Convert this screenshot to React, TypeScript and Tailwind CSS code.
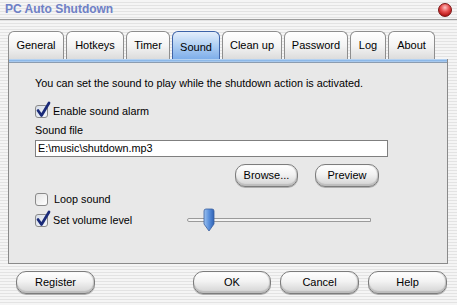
import React from 'react';

const tabs = [
  { label: 'General', w: 'w-[56px]' },
  { label: 'Hotkeys', w: 'w-[58px]' },
  { label: 'Timer', w: 'w-[44px]' },
  { label: 'Sound', w: 'w-[48px]', active: true },
  { label: 'Clean up', w: 'w-[60px]' },
  { label: 'Password', w: 'w-[64px]' },
  { label: 'Log', w: 'w-[36px]' },
  { label: 'About', w: 'w-[47px]' },
];

const Tab = ({ label, w, active }: { label: string; w: string; active?: boolean }) => (
  <div
    className={
      active
        ? `${w} h-[28px] flex items-center justify-center pt-[3px] rounded-t-[6px] border border-b-0 border-[#3d63a8] bg-[linear-gradient(180deg,#e4eefb_0%,#b4d2f4_45%,#7eaeea_100%)]`
        : `${w} h-[28px] flex items-center justify-center rounded-t-[6px] border border-b-0 border-[#8e8e8e] bg-[linear-gradient(180deg,#ffffff_0%,#f4f4f4_50%,#dcdcdc_100%)]`
    }
  >
    {label}
  </div>
);

const Button = ({ label, w }: { label: string; w: string }) => (
  <button
    className={`${w} h-[23px] rounded-[10px] border border-[#7c7c7c] bg-[linear-gradient(180deg,#ffffff_0%,#f2f2f2_45%,#d2d2d2_100%)] shadow-[inset_0_-2px_1px_#bdbdbd,inset_-1px_0_1px_#c8c8c8,0_1px_0_#b0b0b0] flex items-center justify-center leading-none`}
  >
    {label}
  </button>
);

const CheckBox = ({ checked }: { checked?: boolean }) => (
  <div className="relative w-[14px] h-[14px] shrink-0">
    <div
      className={
        checked
          ? 'absolute left-0 top-[1px] w-[13px] h-[13px] rounded-[3px] border border-[#8a8a8a] bg-[linear-gradient(135deg,#d6dde8,#f4f6fa)]'
          : 'absolute left-0 top-[1px] w-[13px] h-[13px] rounded-[3px] border border-[#8a8a8a] bg-[linear-gradient(135deg,#e4e4e4,#ffffff)]'
      }
    />
    {checked && (
      <svg className="absolute left-[1px] top-[-3px]" width="15" height="17" viewBox="0 0 15 17">
        <path d="M2 9.5 L5.5 14.5 L13 2" fill="none" stroke="#1a2a78" strokeWidth="2.7" strokeLinecap="round" strokeLinejoin="round" />
      </svg>
    )}
  </div>
);

export default function App() {
  return (
    <div className="w-[457px] h-[305px] overflow-hidden text-[11px] leading-[13px] text-black font-['Liberation_Sans',Arial,sans-serif] bg-[repeating-linear-gradient(180deg,#f5f5f5_0px,#f5f5f5_2px,#e3e3e3_2px,#e3e3e3_3px)]">
      {/* title bar */}
      <div className="h-[20px] flex items-center justify-between pl-[5px] pr-[5px] border-b border-[#9c9c9c]">
        <span className="font-bold text-[12px] text-[#6e80c6]">PC Auto Shutdown</span>
        <span className="w-[14px] h-[14px] rounded-full border border-[#7a1414] bg-[radial-gradient(circle_at_50%_30%,#fbc4c4_0%,#e85050_40%,#b81818_75%,#7a0a0a_100%)]" />
      </div>

      {/* tabs */}
      <div className="flex items-end gap-[2px] pl-[8px] mt-[11px]">
        {tabs.map((t) => (
          <Tab key={t.label} {...t} />
        ))}
      </div>

      {/* panel */}
      <div className="ml-[8px] w-[440px] h-[205px] border-x border-b border-[#8a8a8a] bg-[#e8e8e8] flex flex-col text-[10.8px]">
        <div className="h-[4px] bg-[linear-gradient(180deg,#c8def6,#8cb8e8_50%,#b4d0f0)] border-b border-[#8b9cb0]" />
        <div className="flex flex-col pl-[26px]">
          <div className="mt-[14px]">You can set the sound to play while the shutdown action is activated.</div>

          <div className="mt-[14px] flex items-center gap-[4px] h-[14px]">
            <CheckBox checked />
            <span>Enable sound alarm</span>
          </div>

          <div className="mt-[6px]">Sound file</div>

          <div className="mt-[3px] w-[353px] h-[17px] border border-[#7f7f7f] bg-white flex items-center pl-[2px]">
            E:\music\shutdown.mp3
          </div>

          <div className="mt-[7px] flex gap-[17px] pl-[200px] text-[11px]">
            <Button label="Browse..." w="w-[63px]" />
            <Button label="Preview" w="w-[64px]" />
          </div>

          <div className="mt-[5px] flex items-center gap-[5px] h-[14px]">
            <CheckBox />
            <span>Loop sound</span>
          </div>

          <div className="mt-[7px] flex items-center h-[14px]">
            <div className="flex items-center gap-[4px] w-[152px]">
              <CheckBox checked />
              <span>Set volume level</span>
            </div>
            <div className="relative w-[184px] h-[4px] rounded-l-full border border-[#9a9a9a] bg-[#f4f4f4]">
              <svg className="absolute left-[15px] top-[-11px]" width="12" height="24" viewBox="0 0 12 24">
                <defs>
                  <linearGradient id="th" x1="0" x2="1" y1="0" y2="0">
                    <stop offset="0" stopColor="#9cc2f0" />
                    <stop offset="0.5" stopColor="#5a90dc" />
                    <stop offset="1" stopColor="#2f62b4" />
                  </linearGradient>
                </defs>
                <path d="M1 3 Q1 1 3 1 H9 Q11 1 11 3 V16 L6 23 L1 16 Z" fill="url(#th)" stroke="#3a5fa0" strokeWidth="0.8" />
              </svg>
            </div>
          </div>
        </div>
      </div>

      {/* bottom buttons */}
      <div className="mt-[7px] flex justify-between pl-[16px] pr-[10px]">
        <Button label="Register" w="w-[79px]" />
        <div className="flex gap-[9px]">
          <Button label="OK" w="w-[78px]" />
          <Button label="Cancel" w="w-[79px]" />
          <Button label="Help" w="w-[79px]" />
        </div>
      </div>
    </div>
  );
}
